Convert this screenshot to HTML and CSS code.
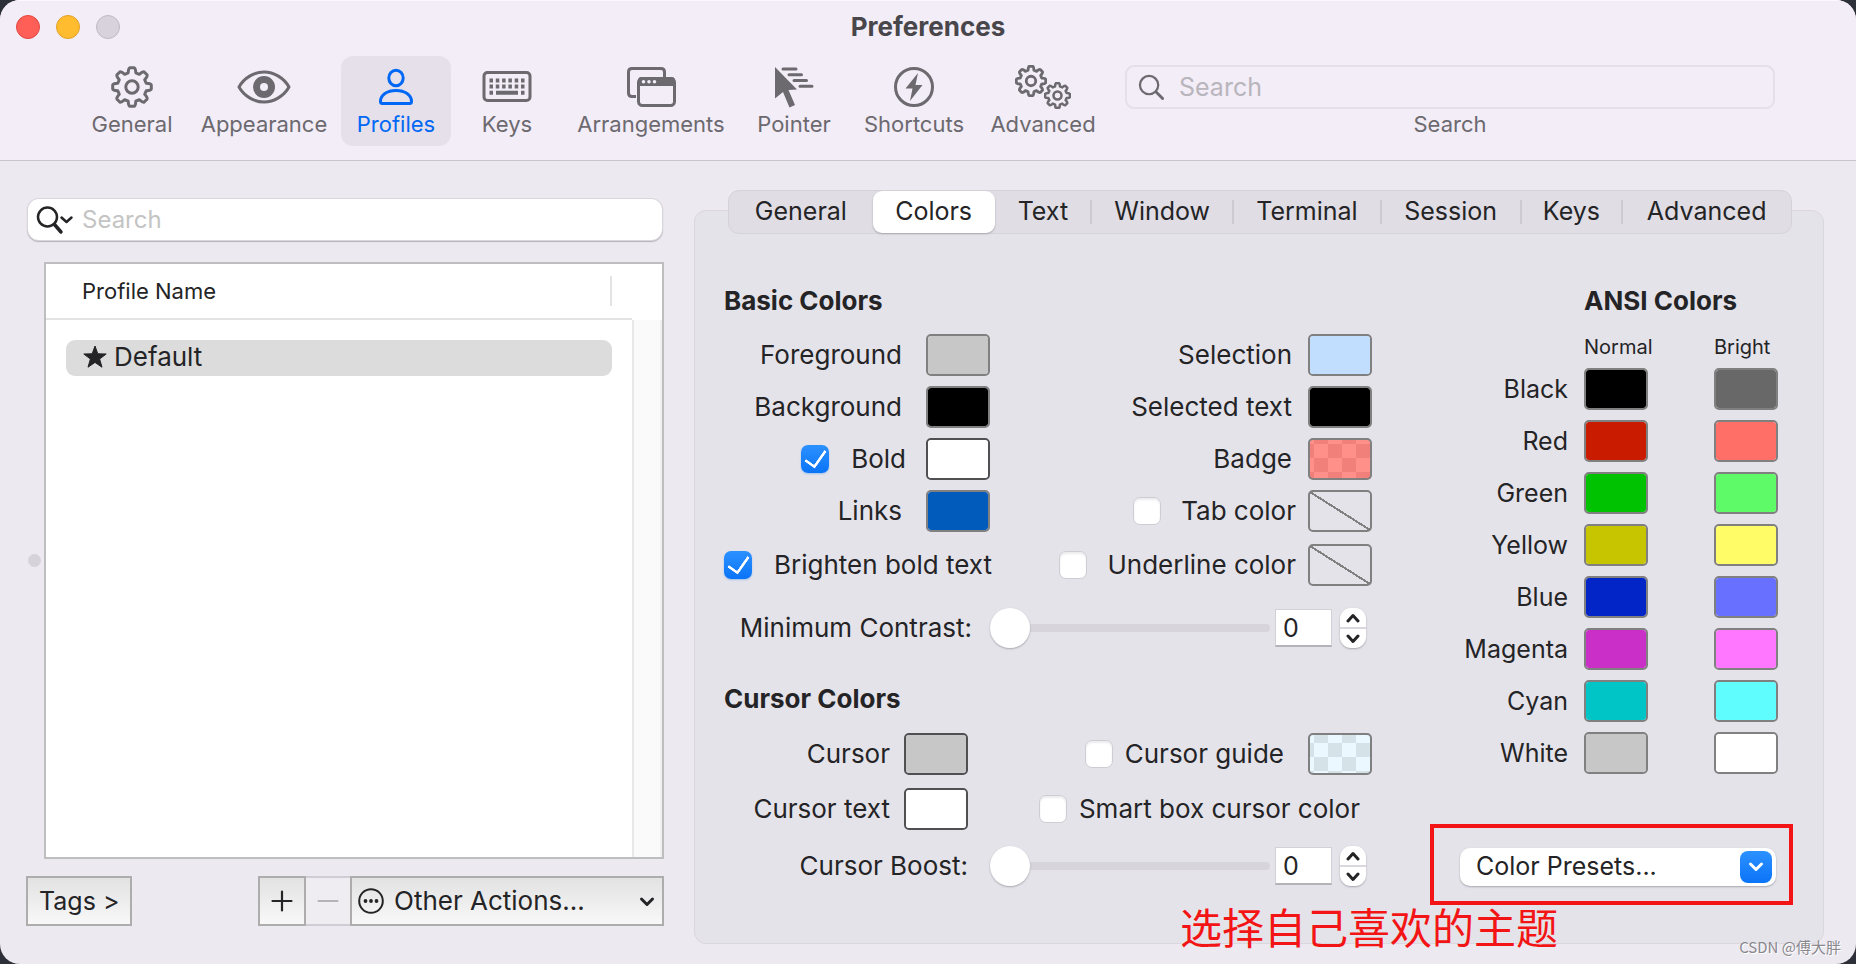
FILE: index.html
```html
<!DOCTYPE html>
<html lang="en">
<head>
<meta charset="utf-8">
<title>Preferences</title>
<link rel="stylesheet" href="styles.css">
</head>
<body>
<svg class="defs" aria-hidden="true">
  <symbol id="gear" viewBox="-21 -21 42 42">
    <path fill="none" stroke="currentColor" stroke-linejoin="round" d="M-3.8-14.2Q-3.6-19.3-2-19.3L2-19.3Q3.6-19.3 3.8-14.2Q5.5-13.4 7.3-12.7Q11-16 12.2-15L15-12.2Q16-11 12.7-7.3Q13.4-5.5 14.2-3.8Q19.3-3.6 19.3-2L19.3 2Q19.3 3.6 14.2 3.8Q13.4 5.5 12.7 7.3Q16 11 15 12.2L12.2 15Q11 16 7.3 12.7Q5.5 13.4 3.8 14.2Q3.6 19.3 2 19.3L-2 19.3Q-3.6 19.3-3.8 14.2Q-5.5 13.4-7.3 12.7Q-11 16-12.2 15L-15 12.2Q-16 11-12.7 7.3Q-13.4 5.5-14.2 3.8Q-19.3 3.6-19.3 2L-19.3-2Q-19.3-3.6-14.2-3.8Q-13.4-5.5-12.7-7.3Q-16-11-15-12.2L-12.2-15Q-11-16-7.3-12.7Q-5.5-13.4-3.8-14.2Z"/>
    <circle r="6.2" fill="none" stroke="currentColor"/>
  </symbol>
</svg>
<div class="window">
  <header class="header">
    <div class="titlebar">
      <div class="lights">
        <button class="light light-close" aria-label="Close"></button>
        <button class="light light-min" aria-label="Minimize"></button>
        <button class="light light-zoom" aria-label="Zoom" disabled></button>
      </div>
      <h1 class="title">Preferences</h1>
    </div>
    <nav class="toolbar" aria-label="Preference sections">
      <button class="tool"><svg class="tool-icon" viewBox="0 0 60 46"><use href="#gear" x="9" y="2" width="42" height="42" stroke-width="3"/></svg>General</button>
      <button class="tool"><svg class="tool-icon" viewBox="0 0 60 46"><path d="M5 23C10 14 20 8 30 8S50 14 55 23C50 32 40 38 30 38S10 32 5 23Z" fill="none" stroke="currentColor" stroke-width="3" stroke-linejoin="round"/><path fill="currentColor" fill-rule="evenodd" d="M30 12a11 11 0 1 0 0 22a11 11 0 1 0 0-22ZM30 19a4 4 0 1 1 0 8a4 4 0 1 1 0-8Z"/></svg>Appearance</button>
      <button class="tool tool-active"><svg class="tool-icon" viewBox="0 0 60 46"><g fill="none" stroke="currentColor" stroke-width="3"><ellipse cx="30" cy="14" rx="7.2" ry="7.8"/><path d="M16.500 39.500Q14.500 39.500 14.500 37.500C14.500 31 21 26.500 30 26.500S45.500 31 45.500 37.500Q45.500 39.500 43.500 39.500Z"/></g></svg>Profiles</button>
      <button class="tool"><svg class="tool-icon" viewBox="0 0 60 46"><rect x="7" y="8.500" width="46" height="28" rx="3.500" fill="none" stroke="currentColor" stroke-width="3"/><g stroke="currentColor" stroke-width="4"><path d="M12.500 16.500h36M12.500 22.500h36" stroke-dasharray="3.500 2.800"/><path d="M12.500 28.800h3.500M19 28.800h22M44 28.800h3.500"/></g></svg>Keys</button>
      <button class="tool"><svg class="tool-icon" viewBox="0 0 60 46"><g fill="none" stroke="currentColor" stroke-width="3"><path d="M15 32.500H11Q7.500 32.500 7.500 29V8Q7.500 4.500 11 4.500H40Q43.500 4.500 43.500 8V14"/><rect x="17.500" y="14.500" width="36" height="27" rx="4"/></g><path fill="currentColor" d="M17 22V17Q17 13 20 13H51Q54 13 54 17V22Z"/><g fill="#f2edf7"><circle cx="22.500" cy="17.800" r="1.800"/><circle cx="28" cy="17.800" r="1.800"/><circle cx="33.500" cy="17.800" r="1.800"/></g></svg>Arrangements</button>
      <button class="tool"><svg class="tool-icon" viewBox="0 0 60 46"><path fill="currentColor" d="M11 3L33 25.500L24.500 26L31 41L25.500 43.500L19 28L11 34.500Z"/><path d="M19 5H32M25 10.800H37.500M30 16.500H42.500M36 22.300H48" stroke="currentColor" stroke-width="3" stroke-linecap="round"/></svg>Pointer</button>
      <button class="tool"><svg class="tool-icon" viewBox="0 0 60 46"><circle cx="30" cy="23" r="18.500" fill="none" stroke="currentColor" stroke-width="3"/><path fill="currentColor" d="M34 9L21.500 24.500H28.500L26 37L38.500 21H31.500Z"/></svg>Shortcuts</button>
      <button class="tool"><svg class="tool-icon" viewBox="0 0 60 46"><use href="#gear" x="2" y="1" width="32" height="32" stroke-width="3.700"/><use href="#gear" x="31" y="18" width="27" height="27" stroke-width="4"/></svg>Advanced</button>
      <div class="tool-search">
        <div class="search-box">
          <svg class="lens" viewBox="0 0 28 28"><circle cx="11.500" cy="11.500" r="9.500" fill="none" stroke="currentColor" stroke-width="2.300"/><path d="M18.500 18.500L25.500 25.500" stroke="currentColor" stroke-width="3" stroke-linecap="round"/></svg>
          <input class="search-input" id="toolbar-search" type="text" placeholder="Search">
        </div>
        <label class="tool-search-label" for="toolbar-search">Search</label>
      </div>
    </nav>
  </header>

  <main class="main">
    <aside class="sidebar">
      <div class="profile-search">
        <svg class="lens-menu" viewBox="0 0 38 30"><circle cx="11.500" cy="12" r="9.500" fill="none" stroke="currentColor" stroke-width="2.500"/><path d="M18.500 19.500L25 27" stroke="currentColor" stroke-width="3.500" stroke-linecap="round"/><path d="M25.500 12.500L30.500 17L35.500 12.500" fill="none" stroke="currentColor" stroke-width="2.500" stroke-linecap="round" stroke-linejoin="round"/></svg>
        <input class="search-input" type="text" placeholder="Search" aria-label="Search profiles">
      </div>
      <div class="list-row">
        <span class="grip"></span>
        <div class="list">
          <div class="list-head"><span>Profile Name</span></div>
          <div class="list-body">
            <button class="profile"><svg class="star" viewBox="0 0 24 24"><path fill="currentColor" d="M12 1L14.800 8.800L23.200 9L16.600 14L19 22.200L12 17.400L5 22.200L7.400 14L.8 9L9.200 8.800Z" stroke="currentColor" stroke-linejoin="round"/></svg>Default</button>
            <span class="scroll-track"></span>
          </div>
        </div>
      </div>
      <div class="actions">
        <button class="bevel tags">Tags &gt;</button>
        <div class="action-group">
          <button class="bevel add" aria-label="Add profile"><svg viewBox="0 0 22 22"><path d="M11 1.500V20.500M1.500 11H20.500" stroke="currentColor" stroke-width="2.200" stroke-linecap="round"/></svg></button>
          <button class="bevel remove" aria-label="Remove profile" disabled><svg viewBox="0 0 22 22"><path d="M1.500 11H20.500" stroke="currentColor" stroke-width="2.200" stroke-linecap="round"/></svg></button>
          <div class="other">
            <svg class="dots" viewBox="0 0 26 26"><circle cx="13" cy="13" r="11.800" fill="none" stroke="currentColor" stroke-width="2"/><g fill="currentColor"><circle cx="7.500" cy="13" r="1.900"/><circle cx="13" cy="13" r="1.900"/><circle cx="18.500" cy="13" r="1.900"/></g></svg>
            <select class="bevel other-select" aria-label="Other actions"><option>Other Actions...</option></select>
            <svg class="other-arrow" viewBox="0 0 16 12"><path d="M2.500 3L8 8.500L13.500 3" fill="none" stroke="currentColor" stroke-width="3" stroke-linecap="round" stroke-linejoin="round"/></svg>
          </div>
        </div>
      </div>
    </aside>

    <section class="panel">
      <div class="tabs" role="tablist">
        <button class="tab" role="tab">General</button>
        <button class="tab tab-active" role="tab" aria-selected="true">Colors</button>
        <button class="tab" role="tab">Text</button>
        <button class="tab tab-sep" role="tab">Window</button>
        <button class="tab tab-sep" role="tab">Terminal</button>
        <button class="tab tab-sep" role="tab">Session</button>
        <button class="tab tab-sep" role="tab">Keys</button>
        <button class="tab tab-sep" role="tab">Advanced</button>
      </div>
      <div class="panel-body">
        <div class="settings">
          <h2 class="heading">Basic Colors</h2>
          <div class="basic-grid">
            <div class="field wide"><label for="fg">Foreground</label><input class="well" type="color" id="fg" value="#c7c7c7"></div>
            <div class="field"><label for="sel">Selection</label><input class="well" type="color" id="sel" value="#c1deff"></div>
            <div class="field wide"><label for="bg">Background</label><input class="well" type="color" id="bg" value="#000000"></div>
            <div class="field"><label for="seltext">Selected text</label><input class="well" type="color" id="seltext" value="#000000"></div>
            <div class="field bold-field"><label class="check"><input type="checkbox" checked>Bold</label><input class="well well-dark" type="color" aria-label="Bold color" value="#ffffff"></div>
            <div class="field"><label for="badge">Badge</label><button class="well badge" id="badge"></button></div>
            <div class="field wide"><label for="links">Links</label><input class="well" type="color" id="links" value="#005bbb"></div>
            <div class="field near"><label class="check"><input type="checkbox">Tab color</label><button class="well none" aria-label="Choose tab color"></button></div>
            <div class="field start"><label class="check"><input type="checkbox" checked>Brighten bold text</label></div>
            <div class="field near"><label class="check"><input type="checkbox">Underline color</label><button class="well none" aria-label="Choose underline color"></button></div>
          </div>
          <div class="slider-row">
            <label for="contrast">Minimum Contrast:</label>
            <input class="slider" id="contrast" type="range" min="0" max="100" value="0">
            <input class="number" type="text" value="0" aria-label="Minimum contrast value">
            <div class="stepper"><button aria-label="Increase"><svg viewBox="0 0 14 10"><path d="M2 8L7 2.500L12 8" fill="none" stroke="currentColor" stroke-width="3" stroke-linecap="round" stroke-linejoin="round"/></svg></button><button aria-label="Decrease"><svg viewBox="0 0 14 10"><path d="M2 2L7 7.500L12 2" fill="none" stroke="currentColor" stroke-width="3" stroke-linecap="round" stroke-linejoin="round"/></svg></button></div>
          </div>
          <h2 class="heading cursor-heading">Cursor Colors</h2>
          <div class="cursor-grid">
            <div class="field cursor-field"><label for="cursor">Cursor</label><input class="well well-dark" type="color" id="cursor" value="#c7c7c7"></div>
            <div class="field wide"><label class="check tight"><input type="checkbox">Cursor guide</label><button class="well guide" aria-label="Choose cursor guide color"></button></div>
            <div class="field cursor-field"><label for="cursortext">Cursor text</label><input class="well well-dark" type="color" id="cursortext" value="#ffffff"></div>
            <div class="field smart"><label class="check tight"><input type="checkbox">Smart box cursor color</label></div>
          </div>
          <div class="slider-row boost-row">
            <label for="boost">Cursor Boost:</label>
            <input class="slider" id="boost" type="range" min="0" max="100" value="0">
            <input class="number" type="text" value="0" aria-label="Cursor boost value">
            <div class="stepper"><button aria-label="Increase"><svg viewBox="0 0 14 10"><path d="M2 8L7 2.500L12 8" fill="none" stroke="currentColor" stroke-width="3" stroke-linecap="round" stroke-linejoin="round"/></svg></button><button aria-label="Decrease"><svg viewBox="0 0 14 10"><path d="M2 2L7 7.500L12 2" fill="none" stroke="currentColor" stroke-width="3" stroke-linecap="round" stroke-linejoin="round"/></svg></button></div>
          </div>
        </div>

        <div class="ansi">
          <h2 class="heading ansi-heading">ANSI Colors</h2>
          <table class="ansi-table">
            <thead><tr><td></td><th scope="col">Normal</th><th scope="col">Bright</th></tr></thead>
            <tbody>
              <tr><th scope="row">Black</th><td><input class="well" type="color" aria-label="Black normal" value="#000000"></td><td><input class="well" type="color" aria-label="Black bright" value="#686868"></td></tr>
              <tr><th scope="row">Red</th><td><input class="well" type="color" aria-label="Red normal" value="#c91b00"></td><td><input class="well" type="color" aria-label="Red bright" value="#ff6e67"></td></tr>
              <tr><th scope="row">Green</th><td><input class="well" type="color" aria-label="Green normal" value="#00c200"></td><td><input class="well" type="color" aria-label="Green bright" value="#5ffa68"></td></tr>
              <tr><th scope="row">Yellow</th><td><input class="well" type="color" aria-label="Yellow normal" value="#c7c400"></td><td><input class="well" type="color" aria-label="Yellow bright" value="#fffc67"></td></tr>
              <tr><th scope="row">Blue</th><td><input class="well" type="color" aria-label="Blue normal" value="#0225c7"></td><td><input class="well" type="color" aria-label="Blue bright" value="#6871ff"></td></tr>
              <tr><th scope="row">Magenta</th><td><input class="well" type="color" aria-label="Magenta normal" value="#ca30c7"></td><td><input class="well" type="color" aria-label="Magenta bright" value="#ff77ff"></td></tr>
              <tr><th scope="row">Cyan</th><td><input class="well" type="color" aria-label="Cyan normal" value="#00c5c7"></td><td><input class="well" type="color" aria-label="Cyan bright" value="#60fdff"></td></tr>
              <tr><th scope="row">White</th><td><input class="well" type="color" aria-label="White normal" value="#c7c7c7"></td><td><input class="well" type="color" aria-label="White bright" value="#ffffff"></td></tr>
            </tbody>
          </table>
          <div class="presets">
            <select class="presets-select" aria-label="Color presets"><option>Color Presets...</option></select>
            <span class="presets-arrow"><svg viewBox="0 0 16 12"><path d="M2.500 3L8 8.500L13.500 3" fill="none" stroke="currentColor" stroke-width="3" stroke-linecap="round" stroke-linejoin="round"/></svg></span>
            <span class="callout-box"></span>
            <span class="callout-text" lang="zh">选择自己喜欢的主题</span>
          </div>
        </div>
      </div>
    </section>
  </main>
  <span class="credit" lang="zh">CSDN @傅大胖</span>
</div>
</body>
</html>
```
FILE: styles.css
```css
* { box-sizing: border-box; }
body {
  margin: 0;
  background: #2d3038;
  color: #242426;
  font: 25px/32px Inter, "Noto Sans CJK SC", sans-serif;
}
button, input, select { font: inherit; color: inherit; margin: 0; }
button { border: 0; padding: 0; background: none; }
svg { display: block; }
h1, h2 { margin: 0; }
.defs { position: absolute; width: 0; height: 0; }

.window {
  position: relative;
  display: flex;
  flex-direction: column;
  min-height: 100vh;
  border-radius: 20px;
  overflow: hidden;
  background: #ece9f0;
}

/* Header */
.header {
  background: #f2edf7;
  border-top: 1px solid #fbf9fd;
  border-bottom: 1px solid #c8c5cd;
  padding-bottom: 14px;
}
.titlebar {
  display: grid;
  grid-template-columns: 1fr auto 1fr;
  align-items: center;
  height: 52px;
}
.lights { display: flex; gap: 16px; padding-left: 16px; }
.light { width: 24px; height: 24px; border-radius: 50%; border: 1px solid; }
.light-close { background: #ff5f57; border-color: #e2463f; }
.light-min { background: #febc2e; border-color: #e0a028; }
.light-zoom { background: #d7d2dc; border-color: #bfbac5; }
.title { font-size: 26px; line-height: 32px; font-weight: 700; color: #48464b; }
.toolbar {
  display: grid;
  grid-template-columns: 110px 154px 110px 112px 176px 110px 130px 128px 1fr;
  padding: 3px 81px 0 77px;
}
.tool {
  padding: 8px 0;
  border-radius: 12px;
  font-size: 22px;
  line-height: 28px;
  color: #6c696f;
}
.tool-active { background: #e5e0ea; color: #0068f4; }
.tool-icon { width: 60px; height: 46px; margin: 0 auto; }
.tool-search { padding: 9px 0 0 18px; text-align: center; }
.search-box {
  display: flex;
  align-items: center;
  gap: 14px;
  height: 44px;
  padding: 0 11px;
  border: 2px solid #e4dfe9;
  border-radius: 9px;
}
.lens { width: 27px; height: 27px; color: #6c696f; flex: none; }
.search-input { flex: 1; min-width: 0; border: 0; padding: 0; background: none; outline: none; }
.search-input::placeholder { color: #b9b5bd; opacity: 1; }
.tool-search-label { display: block; margin-top: 1px; font-size: 22px; line-height: 28px; color: #6c696f; }

/* Body */
.main {
  flex: 1;
  display: grid;
  grid-template-columns: 664fr 1130fr;
  column-gap: 30px;
  padding: 29px 32px 20px 0;
}
.sidebar { display: flex; flex-direction: column; padding: 9px 0 18px; }
.profile-search {
  display: flex;
  align-items: center;
  gap: 8px;
  height: 41px;
  margin: 0 2px 22px 28px;
  padding-left: 8px;
  background: #fff;
  border-radius: 11px;
  box-shadow: 0 0 0 1px #d9d6dd, 0 1px 1px 1px #b5b2b9;
}
.profile-search .search-input { font-size: 24px; }
.profile-search .search-input::placeholder { color: #c4c4c4; }
.lens-menu { width: 38px; height: 30px; }
.list-row { flex: 1; display: flex; align-items: center; gap: 3px; padding-left: 28px; }
.grip { width: 13px; height: 13px; border-radius: 50%; background: #d6d2da; }
.list {
  flex: 1;
  align-self: stretch;
  display: flex;
  flex-direction: column;
  border: 2px solid #bebec0;
  background: #fff;
}
.list-head {
  display: flex;
  align-items: center;
  height: 56px;
  margin-right: 30px;
  border-bottom: 2px solid #e3e3e3;
  font-size: 22px;
  line-height: 30px;
}
.list-head span { flex: 1; margin-right: 20px; padding-left: 36px; border-right: 2px solid #e3e3e3; }
.list-body { flex: 1; display: grid; grid-template-columns: 1fr 30px; align-items: start; }
.profile {
  display: flex;
  align-items: center;
  gap: 7px;
  height: 36px;
  margin: 20px 20px 0;
  padding: 0 0 2px 17px;
  border-radius: 9px;
  background: #dcdcdc;
  font-size: 26px;
}
.star { width: 24px; height: 24px; }
.scroll-track { align-self: stretch; background: #fafafa; border-left: 2px solid #e8e8e8; border-right: 2px solid #f0f0f0; }
.actions { display: flex; justify-content: space-between; padding-left: 26px; margin-top: 17px; }
.bevel {
  height: 50px;
  border: 2px solid #adadad;
  border-radius: 0;
  background: linear-gradient(#e2e2e2, #f8f8f8);
}
.tags { padding: 0 11px; }
.action-group { display: flex; }
.add, .remove { display: grid; place-items: center; width: 48px; }
.bevel svg { width: 22px; height: 22px; }
.remove { width: 44px; border-color: #d0cdd4; border-left: 0; border-right: 0; background: #efecf2; color: #b5b2b8; }
.other { position: relative; width: 314px; }
.other-select { appearance: none; width: 100%; padding: 0 40px 0 42px; font-size: 26px; }
.dots { position: absolute; left: 8px; top: 12px; width: 26px; height: 26px; }
.other-arrow { position: absolute; right: 9px; top: 20px; width: 16px; height: 12px; pointer-events: none; }

/* Panel */
.panel { margin-top: 20px; border: 1px solid #dad7df; border-radius: 12px; background: #e5e3ea; }
.tabs {
  display: grid;
  grid-template-columns: 144fr 122fr 97fr 142fr 148fr 140fr 102fr 169fr;
  height: 44px;
  margin: -21px 31px 0 33px;
  border: 1px solid #d5d2d9;
  border-radius: 11px;
  background: #e0dde4;
}
.tab { position: relative; padding-bottom: 2px; }
.tab-active { background: #fff; border-radius: 9px; box-shadow: 0 1px 2px #a9a6ad; }
.tab-sep::before { content: ""; position: absolute; left: -1px; top: 9px; bottom: 9px; border-left: 2px solid #cdcad1; }
.panel-body { display: flex; justify-content: space-between; gap: 40px; padding: 51px 45px 0 29px; }
.heading { font-size: 26px; line-height: 32px; font-weight: 700; }
.settings { flex: 0 1 648px; font-size: 26px; }
.basic-grid {
  display: grid;
  grid-template-columns: 266px 1fr;
  grid-template-rows: 42px 42px 42px 42px 46px;
  row-gap: 10px;
  margin-top: 17px;
}
.field { display: flex; align-items: center; justify-content: flex-end; gap: 16px; white-space: nowrap; }
.wide { gap: 24px; }
.bold-field { gap: 20px; }
.near { gap: 12px; }
.cursor-field { gap: 14px; }
.start { justify-content: flex-start; }
.check { display: flex; align-items: center; gap: 22px; }
.near .check { gap: 20px; }
.tight { gap: 12px; }
.check input {
  appearance: none;
  width: 28px;
  height: 28px;
  border-radius: 7px;
  border: 1px solid #cfccd3;
  background: #fff;
  box-shadow: inset 0 2px 2px #ededf0;
}
.check input:checked {
  border: 0;
  background: linear-gradient(#2c91ff, #0a74f8);
  box-shadow: 0 1px 2px #9dbfe8;
  display: grid;
  place-items: center;
}
.check input:checked::before {
  content: "";
  width: 10px;
  height: 18px;
  margin-top: -5px;
  border: solid #fff;
  border-width: 0 3px 3px 0;
  border-radius: 1px;
  transform: rotate(35deg);
}
.well {
  appearance: none;
  display: block;
  flex: none;
  width: 64px;
  height: 42px;
  padding: 0;
  border: 2px solid #808080;
  border-radius: 5px;
  background: none;
  overflow: hidden;
}
.well::-webkit-color-swatch-wrapper { padding: 0; }
.well::-webkit-color-swatch { border: 0; border-radius: 2px; }
.well-dark { border-color: #505052; }
.badge { background: repeating-conic-gradient(#ff9089 0 25%, #f08079 0 50%) 4px -10px / 28px 28px; }
.guide { background: repeating-conic-gradient(#ebf8ff 0 25%, #d5e2e8 0 50%) 4px -6px / 28px 28px; }
.none { background: linear-gradient(to top right, transparent 0 calc(50% - 1px), #808080 calc(50% - 1px) calc(50% + 1px), transparent calc(50% + 1px)); }
.slider-row { display: flex; align-items: center; justify-content: flex-end; height: 42px; margin-top: 19px; padding-right: 6px; white-space: nowrap; }
.slider { appearance: none; width: 280px; height: 42px; margin-left: 18px; background: none; }
.slider::-webkit-slider-runnable-track { height: 8px; border-radius: 4px; background: #d7d4db; }
.slider::-webkit-slider-thumb {
  appearance: none;
  width: 40px;
  height: 40px;
  margin-top: -16px;
  border-radius: 50%;
  background: #fff;
  box-shadow: 0 1px 2px #a9a6ad;
}
.number {
  width: 57px;
  height: 38px;
  margin: 0 8px 0 5px;
  padding: 0 7px;
  border: 1px solid #d3d0d7;
  border-bottom: 2px solid #b5b2b9;
  background: #fff;
  font-size: 25px;
}
.stepper { display: flex; flex-direction: column; width: 26px; height: 40px; border-radius: 11px; background: #fff; box-shadow: 0 1px 2px #a9a6ad; }
.stepper button { flex: 1; display: grid; place-items: center; }
.stepper button + button { border-top: 2px solid #dad7de; }
.stepper svg { width: 14px; height: 10px; }
.cursor-heading { margin-top: 34px; }
.cursor-grid { display: grid; grid-template-columns: 244px 1fr; grid-auto-rows: 42px; row-gap: 13px; margin-top: 18px; }
.smart { padding-right: 12px; }
.boost-row { margin-top: 15px; }
.boost-row .slider { margin-left: 22px; }

.ansi { flex: 0 0 318px; }
.ansi-heading { padding-left: 124px; }
.ansi-table { width: 100%; margin-top: 14px; table-layout: fixed; border-collapse: collapse; }
.ansi-table th, .ansi-table td { padding: 0; font-weight: 400; }
.ansi-table thead { height: 32px; font-size: 20px; line-height: 24px; text-align: left; }
.ansi-table thead td { width: 124px; }
.ansi-table thead th:nth-child(2) { width: 130px; }
.ansi-table tbody tr { height: 52px; }
.ansi-table tbody th { padding-right: 16px; text-align: right; }
.presets { position: relative; margin: 69px 2px 0 0; }
.presets-select {
  appearance: none;
  display: block;
  width: 100%;
  height: 38px;
  padding: 0 40px 2px 16px;
  border: 0;
  border-radius: 10px;
  background: #fff;
  box-shadow: 0 1px 2px #a9a6ad;
}
.presets-arrow {
  position: absolute;
  right: 4px;
  top: 3px;
  display: grid;
  place-items: center;
  width: 32px;
  height: 32px;
  border-radius: 8px;
  background: linear-gradient(#2c91ff, #0a74f8);
  color: #fff;
  pointer-events: none;
}
.presets-arrow svg { width: 16px; height: 12px; }
.callout-box { position: absolute; inset: -24px -17px -19px -30px; border: 4px solid #f31515; pointer-events: none; }
.callout-text {
  position: absolute;
  right: 218px;
  top: 52px;
  font: 42px/52px "Noto Sans CJK SC", sans-serif;
  color: #f31515;
  white-space: nowrap;
}
.credit {
  position: absolute;
  right: 15px;
  bottom: 6px;
  font: 15px/22px "Noto Sans CJK SC", sans-serif;
  color: #8a888e;
  text-shadow: 1px 1px 0 #fff;
}
```
